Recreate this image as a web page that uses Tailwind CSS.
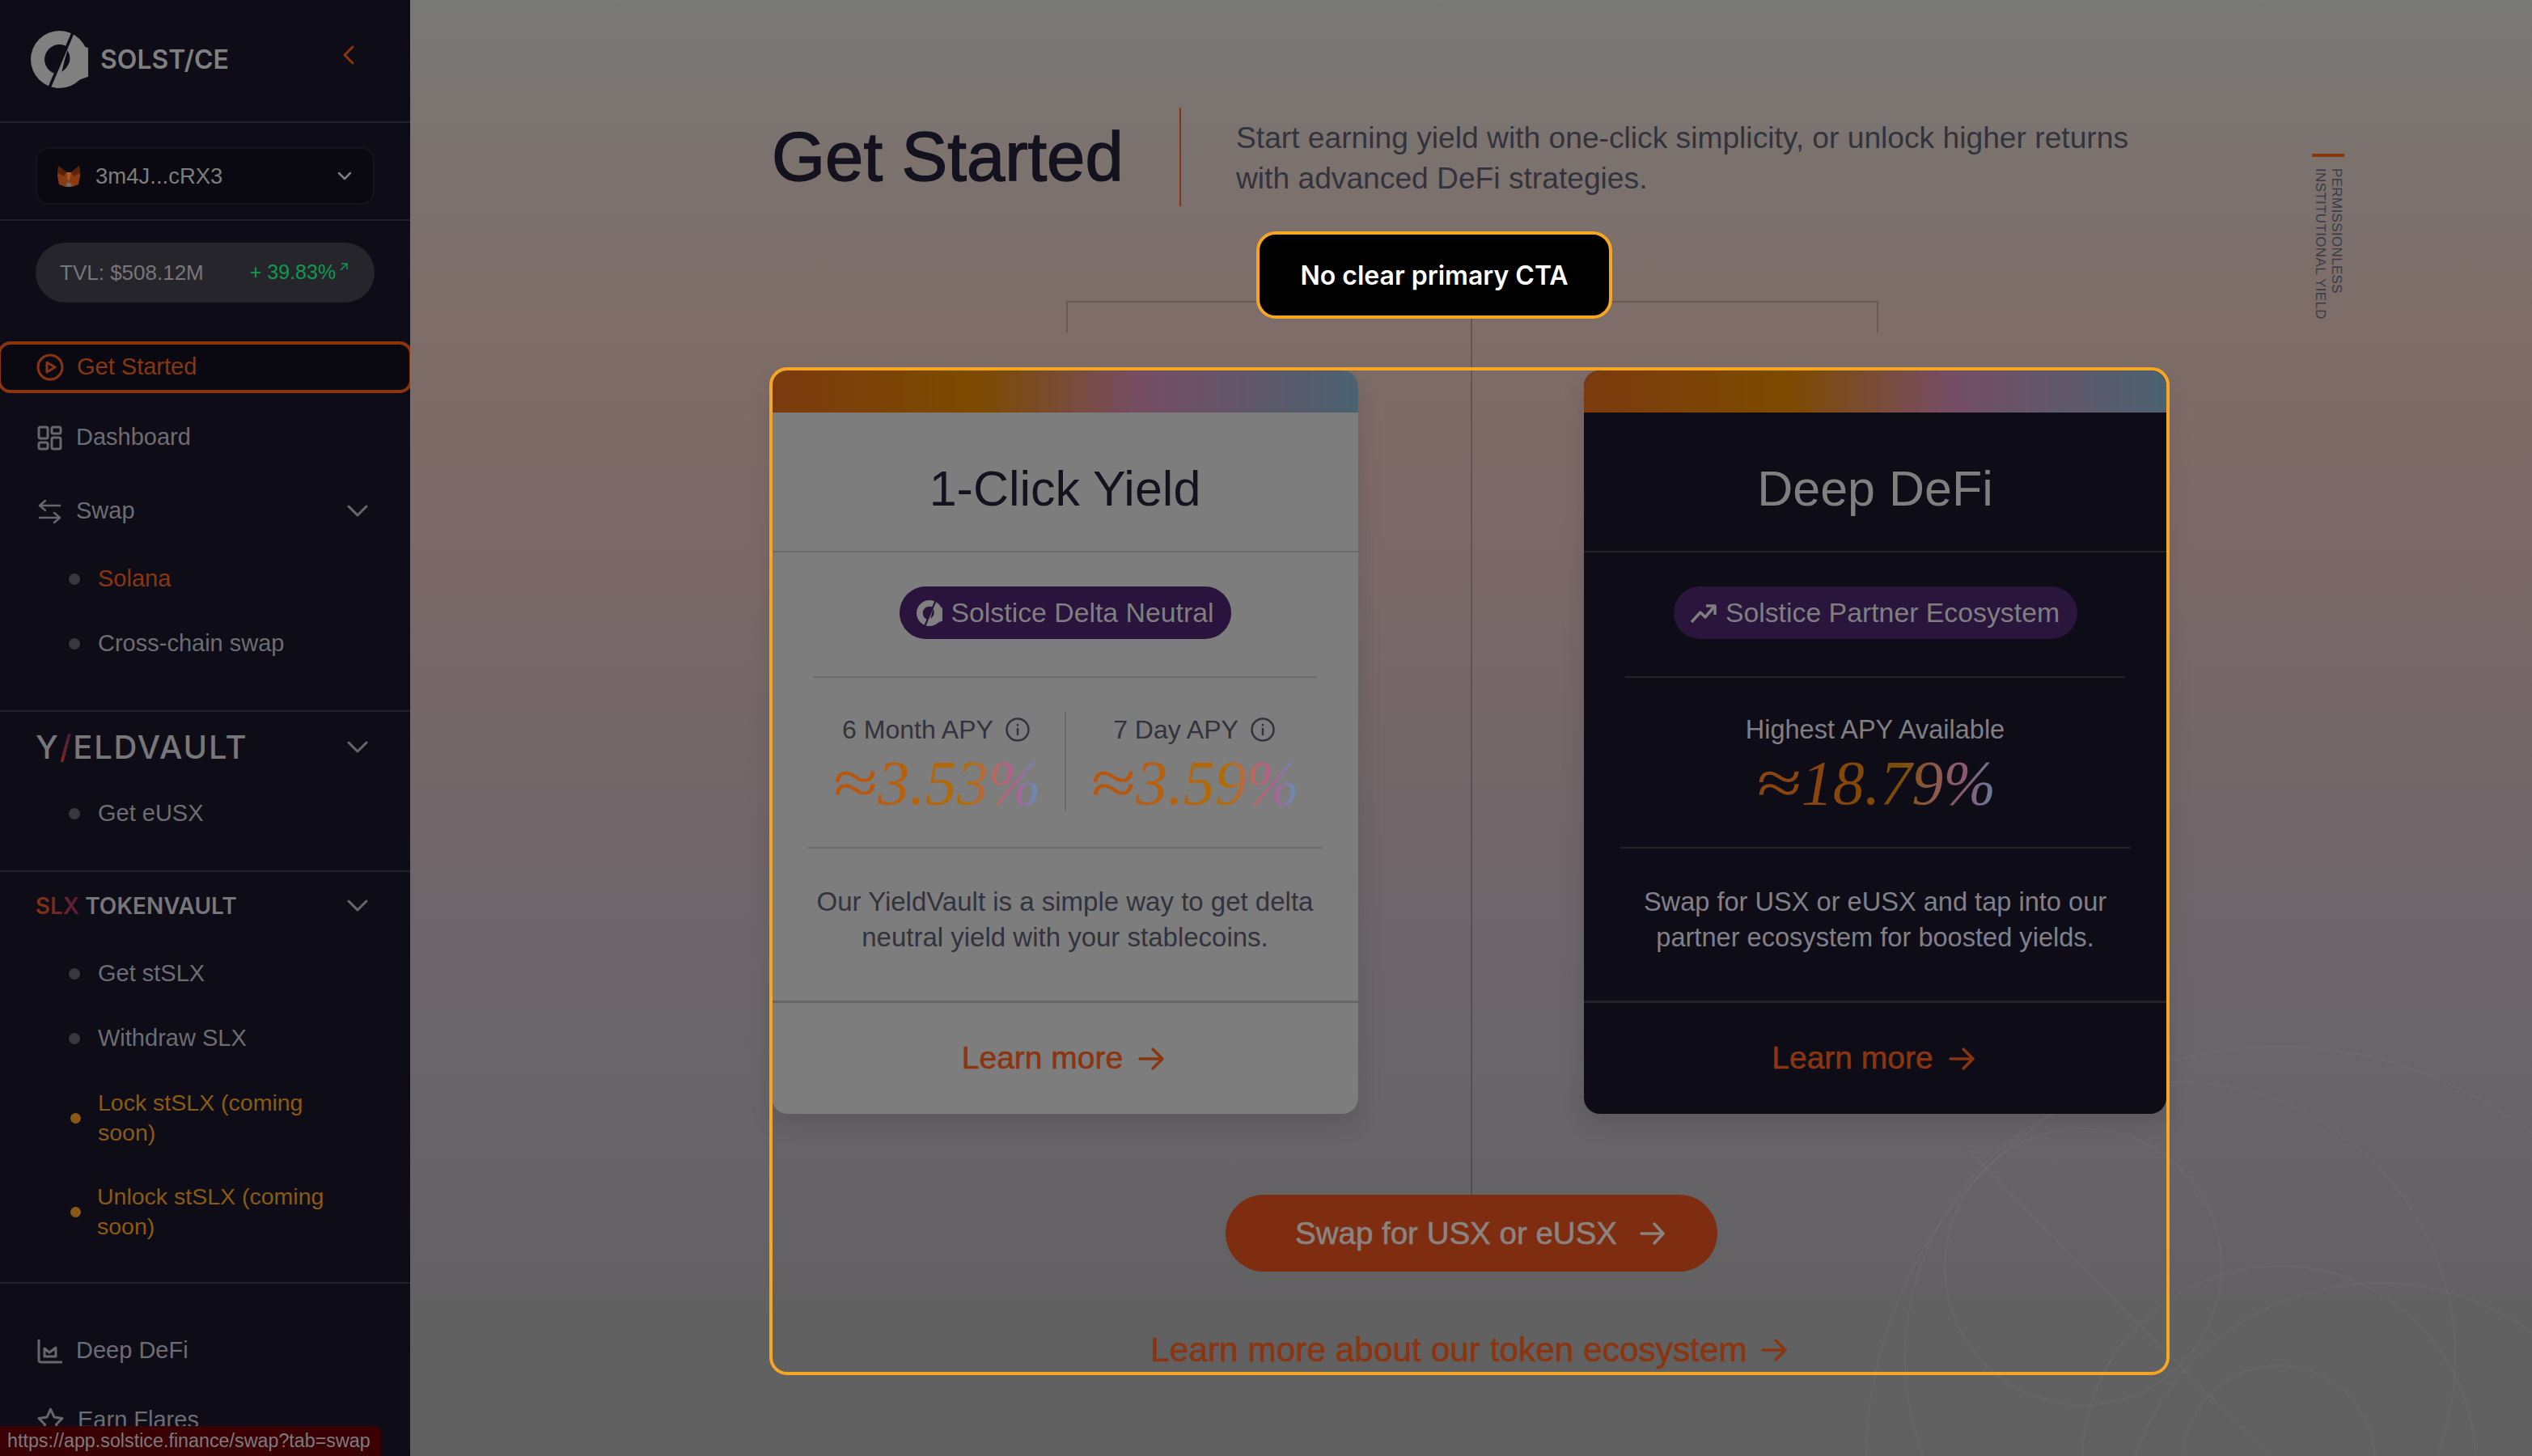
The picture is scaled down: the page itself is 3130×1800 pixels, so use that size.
<!DOCTYPE html>
<html lang="en">
<head>
    <meta charset="UTF-8">
    <meta name="viewport" content="width=device-width, initial-scale=1.0">
    <title>Solstice - Get Started</title>
    <script src="https://cdn.jsdelivr.net/npm/@tailwindcss/browser@4"></script>
</head>
<body class="bg-[#6d6768] font-['Liberation_Sans',sans-serif]">
<div class="relative flex w-[3130px] h-[1800px] overflow-hidden">

    <!-- sidebar -->
    <aside class="w-[507px] h-full shrink-0 overflow-hidden bg-[#0e0d17] text-[29px] text-[#6c6c72]">
        <div class="h-[152px] border-b-2 border-[#22212a] flex items-center pl-[38px] pb-[4px]">
            <svg class="w-[71px] h-[71px]" viewBox="0 0 100 100">
                <circle cx="50" cy="50" r="50" fill="#808080"/>
                <circle cx="50" cy="50" r="26" fill="#0e0d17"/>
                <path d="M66 18 L100 30 L100 80 L44 100 L37 82 Z" fill="#808080"/>
                <path d="M74 2 L32 100" stroke="#0e0d17" stroke-width="5"/>
                <path d="M64 34 Q76 54 54 72 Q58 52 64 34Z" fill="#0e0d17"/>
                <path d="M57 38 L44 72" stroke="#0e0d17" stroke-width="2.5"/>
            </svg>
            <span class="ml-[15px] font-['Inter',sans-serif] text-[32px] font-semibold text-[#808080] mt-[2px]">SOLST/CE</span>
            <svg class="ml-[140px] mb-[10px] w-[16px] h-[24px]" viewBox="0 0 16 24" fill="none" stroke="#8a3510" stroke-width="3" stroke-linecap="round" stroke-linejoin="round"><path d="M13 2 L3 12 L13 22"/></svg>
        </div>

        <div class="h-[121px] border-b-2 border-[#22212a] pt-[30px] pl-[44px]">
            <div class="w-[419px] h-[71px] rounded-[16px] bg-[#0a0911] border-2 border-[#16151e] flex items-center pl-[25px] pr-[26px]">
                <svg class="w-[28px] h-[28px]" viewBox="0 0 28 28">
                    <path d="M1 1 L11 9 H17 L27 1 L28 14 L26 24 L18 27 H10 L2 24 L0 14Z" fill="#8a3a10"/>
                    <path d="M1 1 L11 9 L8 14 L1 10Z M27 1 L17 9 L20 14 L27 10Z" fill="#5a2208"/>
                    <path d="M11 9 H17 L15 19 H13Z" fill="#a85a2e"/>
                    <path d="M10 24 L14 21 L18 24 L16 27 H12Z" fill="#6e6a66"/>
                </svg>
                <span class="ml-[19px] text-[27.5px] text-[#7d7d7d]">3m4J...cRX3</span>
                <svg class="ml-auto w-[18px] h-[12px]" viewBox="0 0 18 12" fill="none" stroke="#7d7d7d" stroke-width="2.5" stroke-linecap="round" stroke-linejoin="round"><path d="M2 2 L9 9 L16 2"/></svg>
            </div>
        </div>

        <div class="mt-[27px] ml-[44px] w-[419px] h-[74px] rounded-full bg-[#26252b] flex items-center pl-[30px] text-[26px] text-[#77777b]">
            <span>TVL: $508.12M</span>
            <span class="ml-[57px] text-[25px] text-[#0d9a50]">+ 39.83%</span>
            <svg class="mb-[14px] ml-[5px] w-[10px] h-[10px]" viewBox="0 0 10 10" fill="none" stroke="#0d9a50" stroke-width="1.5"><path d="M1 9 L9 1 M2 1 H9 V8"/></svg>
        </div>

        <div class="mt-[48px] -ml-[3px] w-[513px] h-[64px] rounded-[16px] border-4 border-[#8a3510] bg-[#0a0911] flex items-center pl-[44px] gap-[16px] text-[#8a3510]">
            <svg class="w-[34px] h-[34px]" viewBox="0 0 34 34" fill="none" stroke="#8a3510" stroke-width="3" stroke-linejoin="round"><circle cx="17" cy="17" r="15"/><path d="M13 11 L23 17 L13 23Z"/></svg>
            <span>Get Started</span>
        </div>

        <div class="mt-[23px] h-[64px] flex items-center pl-[46px] gap-[17px]">
            <svg class="w-[31px] h-[31px]" viewBox="0 0 31 31" fill="none" stroke="#66666c" stroke-width="3"><rect x="2" y="2" width="11" height="14" rx="2"/><rect x="18" y="2" width="11" height="8" rx="2"/><rect x="2" y="21" width="11" height="8" rx="2"/><rect x="18" y="15" width="11" height="14" rx="2"/></svg>
            <span>Dashboard</span>
        </div>

        <div class="mt-[27px] h-[64px] flex items-center pl-[46px] pr-[52px] gap-[17px]">
            <svg class="w-[31px] h-[31px]" viewBox="0 0 31 31" fill="none" stroke="#66666c" stroke-width="2.5" stroke-linecap="round" stroke-linejoin="round"><path d="M10 2 L3 8 L10 14 M3 8 H28"/><path d="M21 17 L28 23 L21 29 M28 23 H3"/></svg>
            <span>Swap</span>
            <svg class="ml-auto w-[26px] h-[16px]" viewBox="0 0 26 16" fill="none" stroke="#66666c" stroke-width="3" stroke-linecap="round" stroke-linejoin="round"><path d="M2 2 L13 13 L24 2"/></svg>
        </div>

        <div class="mt-[32px] h-[40px] flex items-center pl-[85px] gap-[22px] text-[#8a3510]">
            <span class="w-[14px] h-[14px] rounded-full bg-[#38373e]"></span><span>Solana</span>
        </div>
        <div class="mt-[40px] h-[40px] flex items-center pl-[85px] gap-[22px]">
            <span class="w-[14px] h-[14px] rounded-full bg-[#38373e]"></span><span>Cross-chain swap</span>
        </div>

        <div class="mt-[62px] border-t-2 border-[#22212a]">
            <div class="h-[88px] flex items-center pl-[44px] pr-[52px] justify-between">
                <span class="font-['Inter',sans-serif] text-[40px] font-medium tracking-[0.045em] text-[#77777b] leading-none">Y<span class="text-transparent bg-clip-text bg-[linear-gradient(20deg,#8a2a10,#3a1a50)]">/</span>ELDVAULT</span>
                <svg class="w-[26px] h-[16px]" viewBox="0 0 26 16" fill="none" stroke="#66666c" stroke-width="3" stroke-linecap="round" stroke-linejoin="round"><path d="M2 2 L13 13 L24 2"/></svg>
            </div>
            <div class="mt-[18px] h-[40px] flex items-center pl-[85px] gap-[22px]">
                <span class="w-[14px] h-[14px] rounded-full bg-[#38373e]"></span><span>Get eUSX</span>
            </div>
        </div>

        <div class="mt-[50px] border-t-2 border-[#22212a]">
            <div class="h-[84px] flex items-center pl-[44px] pr-[52px] justify-between">
                <span class="font-['Inter',sans-serif] text-[28px] font-semibold text-[#77777b]"><span class="text-transparent bg-clip-text bg-[linear-gradient(90deg,#8a3510,#5a1a3a)]">SLX</span> TOKENVAULT</span>
                <svg class="w-[26px] h-[16px]" viewBox="0 0 26 16" fill="none" stroke="#66666c" stroke-width="3" stroke-linecap="round" stroke-linejoin="round"><path d="M2 2 L13 13 L24 2"/></svg>
            </div>
            <div class="mt-[22px] h-[40px] flex items-center pl-[85px] gap-[22px]">
                <span class="w-[14px] h-[14px] rounded-full bg-[#38373e]"></span><span>Get stSLX</span>
            </div>
            <div class="mt-[40px] h-[40px] flex items-center pl-[85px] gap-[22px]">
                <span class="w-[14px] h-[14px] rounded-full bg-[#38373e]"></span><span>Withdraw SLX</span>
            </div>
            <div class="mt-[41px] h-[74px] flex items-center pl-[87px] gap-[21px] text-[28.5px] text-[#8a5a14] leading-[37px]">
                <span class="w-[13px] h-[13px] rounded-full bg-[#8a5a14]"></span><span class="w-[300px]">Lock stSLX (coming soon)</span>
            </div>
            <div class="mt-[42px] h-[74px] flex items-center pl-[87px] gap-[20px] text-[28.5px] text-[#8a5a14] leading-[37px]">
                <span class="w-[13px] h-[13px] rounded-full bg-[#8a5a14]"></span><span class="w-[300px]">Unlock stSLX (coming soon)</span>
            </div>
        </div>

        <div class="mt-[50px] border-t-2 border-[#22212a]">
            <div class="mt-[51px] h-[64px] flex items-center pl-[46px] gap-[17px]">
                <svg class="w-[31px] h-[31px]" viewBox="0 0 31 31" fill="none" stroke="#66666c" stroke-width="3" stroke-linejoin="round" stroke-linecap="round"><path d="M2 2 V26 Q2 29 5 29 H30"/><path d="M9 22 V12 L15 17 L23 11 V22 Z"/></svg>
                <span>Deep DeFi</span>
            </div>
            <div class="mt-[22px] h-[64px] flex items-center pl-[46px] gap-[17px]">
                <svg class="w-[33px] h-[33px]" viewBox="0 0 33 33" fill="none" stroke="#66666c" stroke-width="3" stroke-linejoin="round"><path d="M16.5 2 L21 12 L31 13.5 L23.5 21 L25.5 31 L16.5 26 L7.5 31 L9.5 21 L2 13.5 L12 12Z"/></svg>
                <span>Earn Flares</span>
            </div>
        </div>
    </aside>

    <!-- main -->
    <main class="relative flex-1 h-full overflow-hidden bg-[linear-gradient(180deg,#787978_0%,#7b736f_9%,#7e6c67_24%,#7d6a68_34%,#716669_55%,#696569_72%,#626162_90%,#606060_100%)]">
        <!-- faint background rings -->
        <svg class="absolute left-0 top-0 w-[2623px] h-[1800px]" viewBox="507 0 2623 1800" fill="none" stroke="#ffffff" stroke-opacity="0.035" stroke-width="2">
            <circle cx="2575" cy="1566" r="171"/>
            <circle cx="2695" cy="1678" r="340"/>
            <circle cx="2817" cy="1804" r="510"/>
            <circle cx="2817" cy="1808" r="243"/>
            <circle cx="2941" cy="1906" r="320"/>
            <circle cx="2817" cy="1807" r="119"/>
            <path d="M2428 1418 L2805 1800"/>
        </svg>

        <div class="relative flex">
            <div class="ml-[447px] w-[1730px] shrink-0 pt-[133px]">
                <div class="flex h-[122px] items-center">
                    <h1 class="w-[431px] text-[85px] text-[#14121f] [-webkit-text-stroke:1.5px_#14121f] whitespace-nowrap">Get Started</h1>
                    <div class="ml-[73px] w-[2px] h-full bg-[#8a3510]"></div>
                    <p class="ml-[68px] pt-[1px] text-[37.2px] leading-[50px] text-[#33333d] whitespace-nowrap">Start earning yield with one-click simplicity, or unlock higher returns<br>with advanced DeFi strategies.</p>
                </div>

                <div class="relative pt-[117px]">
                    <div class="absolute left-[864px] top-[117px] h-[1105px] w-[2px] bg-black/20"></div>

                    <div class="relative ml-[364px] w-[1004px] h-[39px] border-t-2 border-l-2 border-r-2 border-[#675a56]"></div>

                    <div class="relative mt-[47px] w-[1724px] flex justify-between">
                        <section class="w-[725px] h-[919px] rounded-[20px] overflow-hidden bg-[#7d7d7d] shadow-[0_12px_30px_rgba(0,0,0,0.12)]">
                            <div class="h-[52px] bg-[linear-gradient(90deg,#7b3a0e_0%,#7c4b00_35%,#764c62_62%,#4b6270_100%)]"></div>
                            <div class="h-[173px] pt-[18px] flex items-center justify-center border-b-2 border-[#6b6b6b] text-[61px] text-[#14121f]">1-Click Yield</div>
                            <div class="mt-[42px] flex justify-center">
                                <div class="h-[65px] w-[410px] rounded-full bg-[#2a133c] flex items-center justify-center gap-[11px] text-[33.8px] text-[#7f7f7f]">
                                    <svg class="w-[32px] h-[32px]" viewBox="0 0 100 100">
                                        <circle cx="50" cy="50" r="50" fill="#808080"/>
                                        <circle cx="50" cy="50" r="26" fill="#2a133c"/>
                                        <path d="M66 18 L100 30 L100 80 L44 100 L37 82 Z" fill="#808080"/>
                                        <path d="M74 2 L32 100" stroke="#2a133c" stroke-width="7"/>
                                        <path d="M64 34 Q76 54 54 72 Q58 52 64 34Z" fill="#2a133c"/>
                                    </svg>
                                    <span>Solstice Delta Neutral</span>
                                </div>
                            </div>
                            <div class="mt-[46px] mx-[51px] h-[2px] bg-[#6b6b6b]"></div>
                            <div class="h-[209px] pt-[42px] flex justify-center">
                                <div class="w-[317px] text-center">
                                    <div class="h-[44px] flex items-center justify-center gap-[15px] text-[32px] text-[#33333d]">
                                        <span>6 Month APY</span>
                                        <svg class="w-[30px] h-[30px]" viewBox="0 0 30 30" fill="none" stroke="#33333d" stroke-width="2.5" stroke-linecap="round"><circle cx="15" cy="15" r="13.5"/><path d="M15 14 V21 M15 9 V9.5"/></svg>
                                    </div>
                                    <div class="h-[76px] mt-[6px] flex items-baseline justify-center font-['Liberation_Serif',serif] italic text-[78px] leading-[76px]">
                                        <span class="inline-block w-[58px] text-center scale-x-[1.3] text-[#b8580f]">≈</span>
                                        <span class="text-transparent bg-clip-text bg-[linear-gradient(90deg,#b85c12_0%,#b06c06_55%,#b86a58_70%,#b25f90_84%,#5a94c0_100%)]">3.53%</span>
                                    </div>
                                </div>
                                <div class="w-[2px] h-[123px] bg-[#6b6b6b]"></div>
                                <div class="w-[317px] text-center">
                                    <div class="h-[44px] flex items-center justify-center gap-[15px] text-[32px] text-[#33333d]">
                                        <span>7 Day APY</span>
                                        <svg class="w-[30px] h-[30px]" viewBox="0 0 30 30" fill="none" stroke="#33333d" stroke-width="2.5" stroke-linecap="round"><circle cx="15" cy="15" r="13.5"/><path d="M15 14 V21 M15 9 V9.5"/></svg>
                                    </div>
                                    <div class="h-[76px] mt-[6px] flex items-baseline justify-center font-['Liberation_Serif',serif] italic text-[78px] leading-[76px]">
                                        <span class="inline-block w-[58px] text-center scale-x-[1.3] text-[#b8580f]">≈</span>
                                        <span class="text-transparent bg-clip-text bg-[linear-gradient(90deg,#b85c12_0%,#b06c06_55%,#b86a58_70%,#b25f90_84%,#5a94c0_100%)]">3.59%</span>
                                    </div>
                                </div>
                            </div>
                            <div class="mx-[44px] h-[2px] bg-[#6b6b6b]"></div>
                            <p class="h-[188px] pt-[44px] text-center text-[33px] leading-[44px] text-[#33333d]">Our YieldVault is a simple way to get delta<br>neutral yield with your stablecoins.</p>
                            <div class="h-[140px] pr-[4px] border-t-[3px] border-[#666666] flex items-center justify-center gap-[18px] text-[39px] [-webkit-text-stroke:0.6px_#8a3510] text-[#8a3510]">
                                <span>Learn more</span>
                                <svg class="w-[34px] h-[30px]" viewBox="0 0 34 30" fill="none" stroke="#8a3510" stroke-width="3.5" stroke-linecap="round" stroke-linejoin="round"><path d="M3 15 H31 M19 3 L31 15 L19 27"/></svg>
                            </div>
                        </section>

                        <section class="w-[720px] h-[919px] rounded-[20px] overflow-hidden bg-[#0e0d17] shadow-[0_12px_30px_rgba(0,0,0,0.12)]">
                            <div class="h-[52px] bg-[linear-gradient(90deg,#7b3a0e_0%,#7c4b00_35%,#764c62_62%,#4b6270_100%)]"></div>
                            <div class="h-[173px] pt-[18px] flex items-center justify-center border-b-2 border-[#232228] text-[61px] text-[#7f7f7f]">Deep DeFi</div>
                            <div class="mt-[42px] flex justify-center">
                                <div class="h-[65px] w-[499px] rounded-full bg-[#2a153c] flex items-center justify-center gap-[11px] text-[33.8px] text-[#7f7f7f]">
                                    <svg class="w-[32px] h-[26px]" viewBox="0 0 32 26" fill="none" stroke="#7f7f7f" stroke-width="3.5" stroke-linejoin="round"><path d="M1 24 L12 12 L18 18 L29 5"/><path d="M19 4 H30 V15"/></svg>
                                    <span>Solstice Partner Ecosystem</span>
                                </div>
                            </div>
                            <div class="mt-[46px] mx-[51px] h-[2px] bg-[#232228]"></div>
                            <div class="h-[209px] pt-[42px] text-center">
                                <div class="h-[44px] flex items-center justify-center text-[32.5px] text-[#7f7f85]">Highest APY Available</div>
                                <div class="h-[76px] mt-[6px] flex items-baseline justify-center font-['Liberation_Serif',serif] italic text-[78px] leading-[76px]">
                                    <span class="inline-block w-[58px] text-center scale-x-[1.3] text-[#8a4410]">≈</span>
                                    <span class="text-transparent bg-clip-text bg-[linear-gradient(90deg,#8a4410_0%,#7c4c02_50%,#8e5a50_70%,#8a5a78_85%,#64809a_100%)]">18.79%</span>
                                </div>
                            </div>
                            <div class="mx-[44px] h-[2px] bg-[#232228]"></div>
                            <p class="h-[188px] pt-[44px] text-center text-[32.6px] leading-[44px] text-[#80808a]">Swap for USX or eUSX and tap into our<br>partner ecosystem for boosted yields.</p>
                            <div class="h-[140px] pr-[4px] border-t-[3px] border-[#232228] flex items-center justify-center gap-[18px] text-[39px] [-webkit-text-stroke:0.6px_#8a3510] text-[#8a3510]">
                                <span>Learn more</span>
                                <svg class="w-[34px] h-[30px]" viewBox="0 0 34 30" fill="none" stroke="#8a3510" stroke-width="3.5" stroke-linecap="round" stroke-linejoin="round"><path d="M3 15 H31 M19 3 L31 15 L19 27"/></svg>
                            </div>
                        </section>
                    </div>

                    <div class="relative mt-[100px] flex justify-center">
                        <div class="w-[608px] h-[95px] pl-[22px] rounded-full bg-[#7f2d10] flex items-center justify-center gap-[28px] text-[38.5px] [-webkit-text-stroke:0.6px_#8a8380] text-[#8a8380]">
                            <span>Swap for USX or eUSX</span>
                            <svg class="w-[32px] h-[30px]" viewBox="0 0 32 30" fill="none" stroke="#8a8380" stroke-width="3.5" stroke-linecap="round" stroke-linejoin="round"><path d="M2 15 H29 M18 3 L29 15 L18 27"/></svg>
                        </div>
                    </div>

                    <div class="mt-[72px] w-[1724px] h-[50px] flex items-center justify-center gap-[16px] text-[42.4px] [-webkit-text-stroke:0.6px_#8a3510] text-[#8a3510]">
                        <span>Learn more about our token ecosystem</span>
                        <svg class="w-[34px] h-[30px]" viewBox="0 0 34 30" fill="none" stroke="#8a3510" stroke-width="3.5" stroke-linecap="round" stroke-linejoin="round"><path d="M3 15 H31 M19 3 L31 15 L19 27"/></svg>
                    </div>
                </div>
            </div>

            <!-- side label -->
            <div class="ml-[174px] pt-[190px] w-[40px]">
                <div class="h-[4px] bg-[#8a3510]"></div>
                <div class="mt-[7px] h-[200px] flex justify-center [writing-mode:vertical-rl] text-[17px] leading-[20px] tracking-[0.02em] text-[#3a3a48] whitespace-nowrap">
                    PERMISSIONLESS<br>INSTITUTIONAL YIELD
                </div>
            </div>
        </div>

        <!-- annotation over the page -->
        <div class="absolute left-[444px] top-[454px] w-[1731px] h-[1246px] rounded-[22px] border-4 border-[#f5a623]"></div>
        <div class="absolute left-[1046px] top-[286px] w-[440px] h-[108px] pt-[2px] rounded-[24px] border-4 border-[#f5a623] bg-black flex items-center justify-center font-['Inter',sans-serif] text-[32px] font-semibold text-white">No clear primary CTA</div>
    </main>

    <!-- link status bubble -->
    <div class="absolute left-0 bottom-0 w-[471px] h-[37px] rounded-tr-[8px] bg-[#3a0004] pl-[9px] flex items-center text-[23.3px] text-[#7c7c7c] whitespace-nowrap">https://app.solstice.finance/swap?tab=swap</div>
</div>
</body>
</html>
